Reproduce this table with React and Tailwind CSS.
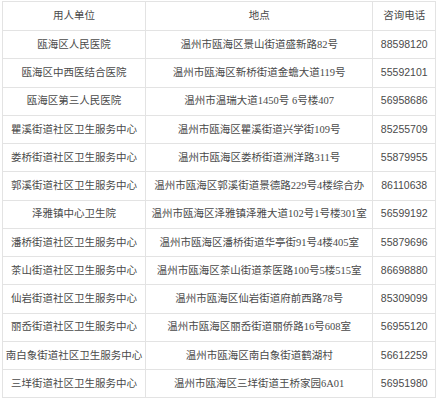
import React from "react";

const rows = [
  ["瓯海区人民医院", "温州市瓯海区景山街道盛新路82号", "88598120"],
  ["瓯海区中西医结合医院", "温州市瓯海区新桥街道金蟾大道119号", "55592101"],
  ["瓯海区第三人民医院", "温州市温瑞大道1450号 6号楼407", "56958686"],
  ["瞿溪街道社区卫生服务中心", "温州市瓯海区瞿溪街道兴学街109号", "85255709"],
  ["娄桥街道社区卫生服务中心", "温州市瓯海区娄桥街道洲洋路311号", "55879955"],
  ["郭溪街道社区卫生服务中心", "温州市瓯海区郭溪街道景德路229号4楼综合办", "86110638"],
  ["泽雅镇中心卫生院", "温州市瓯海区泽雅镇泽雅大道102号1号楼301室", "56599192"],
  ["潘桥街道社区卫生服务中心", "温州市瓯海区潘桥街道华亭街91号4楼405室", "55879696"],
  ["茶山街道社区卫生服务中心", "温州市瓯海区茶山街道茶医路100号5楼515室", "86698880"],
  ["仙岩街道社区卫生服务中心", "温州市瓯海区仙岩街道府前西路78号", "85309099"],
  ["丽岙街道社区卫生服务中心", "温州市瓯海区丽岙街道丽侨路16号608室", "56955120"],
  ["南白象街道社区卫生服务中心", "温州市瓯海区南白象街道鹤湖村", "56612259"],
  ["三垟街道社区卫生服务中心", "温州市瓯海区三垟街道王桥家园6A01", "56951980"],
];

const cjk = { fontFamily: '"Liberation Serif", "Noto Sans CJK SC", serif' };

export default function App() {
  return (
    <div className="w-[436px] h-[400px] bg-white overflow-hidden pl-[2px] pt-[1px]">
      <table className="table-fixed border-collapse text-[10.5px] text-[#4a4a4a]" style={cjk}>
        <colgroup>
          <col className="w-[143px]" />
          <col className="w-[228px]" />
          <col className="w-[63px]" />
        </colgroup>
        <thead>
          <tr className="h-[29px]">
            <th className="border border-[#e3e3e3] font-normal text-center">用人单位</th>
            <th className="border border-[#e3e3e3] font-normal text-center">地点</th>
            <th className="border border-[#e3e3e3] font-normal text-center">咨询电话</th>
          </tr>
        </thead>
        <tbody>
          {rows.map((r) => (
            <tr key={r[0]} className="h-[28.25px]">
              <td className="border border-[#e3e3e3] text-center whitespace-nowrap p-0">{r[0]}</td>
              <td className="border border-[#e3e3e3] text-center whitespace-nowrap p-0">{r[1]}</td>
              <td className="border border-[#e3e3e3] text-center whitespace-nowrap p-0 font-['Liberation_Sans',sans-serif]">
                {r[2]}
              </td>
            </tr>
          ))}
        </tbody>
      </table>
    </div>
  );
}
